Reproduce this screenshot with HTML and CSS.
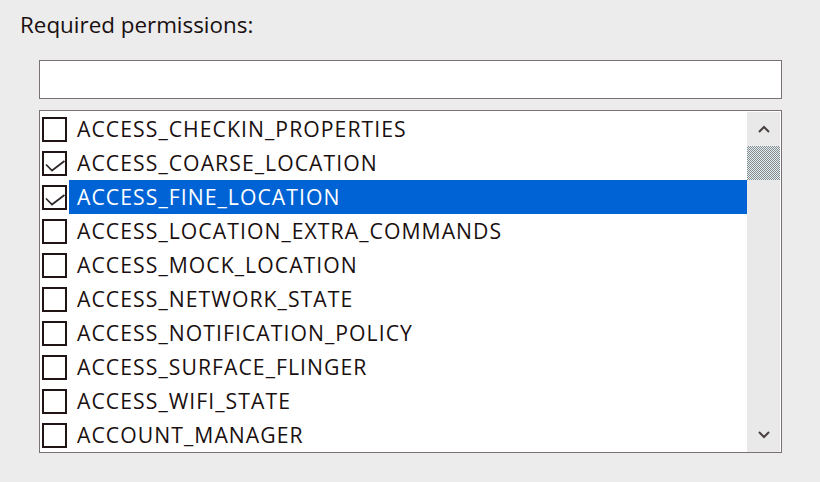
FILE: index.html
```html
<!DOCTYPE html>
<html>
<head>
<meta charset="utf-8">
<link rel="stylesheet" href="styles.css">
</head>
<body>
<div class="panel">
  <div class="title">Required permissions:</div>
  <input class="filter" type="text">
  <div class="listbox">
    <div class="items">
      <div class="row"><span class="cb"></span><span class="label">ACCESS_CHECKIN_PROPERTIES</span></div>
      <div class="row"><span class="cb"><svg viewBox="0 0 25 25" width="25" height="25"><polyline points="4,13.5 10,19.5 22.5,10" fill="none" stroke="#2e2626" stroke-width="1.7"/></svg></span><span class="label">ACCESS_COARSE_LOCATION</span></div>
      <div class="row selected"><span class="cb"><svg viewBox="0 0 25 25" width="25" height="25"><polyline points="4,13.5 10,19.5 22.5,10" fill="none" stroke="#2e2626" stroke-width="1.7"/></svg></span><span class="label">ACCESS_FINE_LOCATION</span></div>
      <div class="row"><span class="cb"></span><span class="label">ACCESS_LOCATION_EXTRA_COMMANDS</span></div>
      <div class="row"><span class="cb"></span><span class="label">ACCESS_MOCK_LOCATION</span></div>
      <div class="row"><span class="cb"></span><span class="label">ACCESS_NETWORK_STATE</span></div>
      <div class="row"><span class="cb"></span><span class="label">ACCESS_NOTIFICATION_POLICY</span></div>
      <div class="row"><span class="cb"></span><span class="label">ACCESS_SURFACE_FLINGER</span></div>
      <div class="row"><span class="cb"></span><span class="label">ACCESS_WIFI_STATE</span></div>
      <div class="row"><span class="cb"></span><span class="label">ACCOUNT_MANAGER</span></div>
    </div>
    <div class="scrollbar">
      <div class="arrow"><svg viewBox="0 0 12 8" width="12" height="8"><polyline points="1,7 6,2 11,7" fill="none" stroke="#4a4040" stroke-width="2"/></svg></div>
      <div class="thumb"></div>
      <div class="track"></div>
      <div class="arrow"><svg viewBox="0 0 12 8" width="12" height="8"><polyline points="1,1 6,6 11,1" fill="none" stroke="#4a4040" stroke-width="2"/></svg></div>
    </div>
  </div>
</div>
</body>
</html>
```
FILE: styles.css
```css
html, body {
  margin: 0;
  padding: 0;
  background: #ececec;
  width: 820px;
  height: 482px;
  overflow: hidden;
  font-family: "Open Sans", "Noto Sans", sans-serif;
  color: #1a1010;
}
.panel {
  display: flex;
  flex-direction: column;
  padding: 8px 0 0 20px;
}
.title {
  font-size: 22.4px;
  line-height: 34px;
  height: 34px;
}
.filter {
  display: block;
  box-sizing: border-box;
  margin: 18px 0 0 19px;
  width: 743px;
  height: 39px;
  border: 1px solid #7a7272;
  background: #fff;
  padding: 0;
  outline: none;
}
.listbox {
  box-sizing: border-box;
  margin: 11px 0 0 19px;
  width: 743px;
  height: 343px;
  border: 1px solid #7a7272;
  background: #fff;
  padding: 1px 1px 0 1px;
  display: flex;
}
.items {
  flex: 1;
  display: flex;
  flex-direction: column;
}
.row {
  height: 34px;
  display: flex;
  align-items: center;
}
.cb {
  box-sizing: border-box;
  width: 25px;
  height: 25px;
  margin-left: 1px;
  border: 2px solid #201414;
  background: #fff;
  position: relative;
  flex: none;
}
.cb svg {
  position: absolute;
  left: -2px;
  top: -2px;
}
.label {
  margin-left: 2px;
  flex: 1;
  height: 34px;
  line-height: 34px;
  padding-left: 8px;
  font-size: 21.2px;
  letter-spacing: 1.05px;
  white-space: nowrap;
}
.selected .label {
  background: #0063d5;
  color: #fff;
}
.scrollbar {
  width: 33px;
  height: 340px;
  background: #e9e9e9;
  display: flex;
  flex-direction: column;
}
.arrow {
  height: 34px;
  display: flex;
  align-items: center;
  justify-content: center;
  flex: none;
}
.thumb {
  height: 34px;
  flex: none;
  background-color: #c4d4d8;
  background-image: repeating-conic-gradient(#8e8888 0 25%, #d8f0f6 0 50%);
  background-size: 2px 2px;
}
.track {
  flex: 1;
}
```
